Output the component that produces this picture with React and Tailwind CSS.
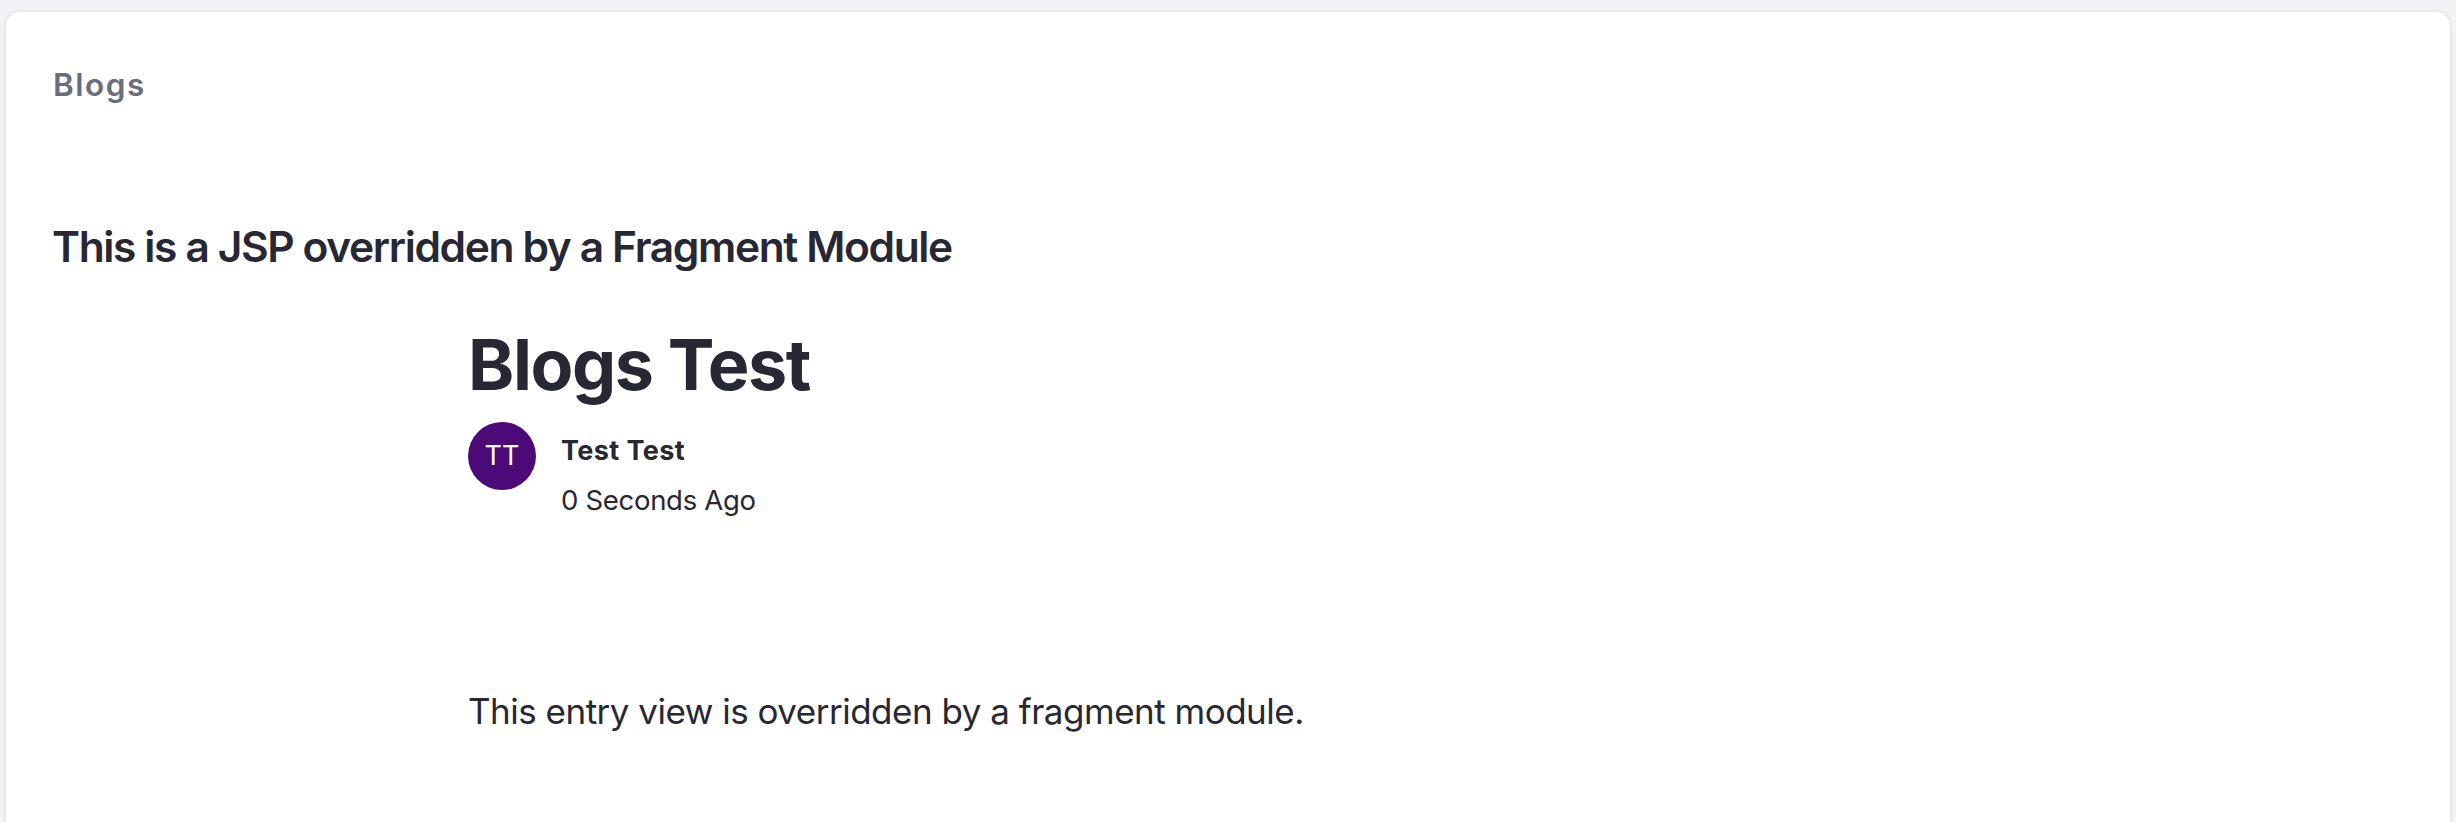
export default function App() {
  return (
    <div className="h-[822px] overflow-hidden bg-[#f1f2f5] px-[4px] pt-[10px] font-['Inter',sans-serif] text-[#272833]">
      <main className="h-[900px] rounded-[16px] border-2 border-[#e7e7ed] bg-white px-[47px] pt-[51px]">
        <h2 className="h-[44px] text-[31.5px] font-semibold leading-[44px] tracking-[1.5px] text-[#6b6c7e] whitespace-nowrap">Blogs</h2>
        <h3 className="-ml-px mt-[112px] h-[56px] text-[42.5px] font-semibold leading-[56px] tracking-[-1.38px] whitespace-nowrap">This is a JSP overridden by a Fragment Module</h3>
        <article className="ml-[415px] mt-[45px]">
          <h1 className="h-[90px] text-[70px] font-bold leading-[90px] tracking-[-1.4px] whitespace-nowrap">Blogs Test</h1>
          <div className="mt-[12px] flex gap-[25px]">
            <div className="flex size-[68px] items-center justify-center rounded-full bg-[#4b0a77] pt-px text-[27px] text-white">TT</div>
            <div className="pt-[4px] text-[27.5px] leading-[50px]">
              <div className="text-[27px] font-bold tracking-[0.4px]">Test Test</div>
              <div className="-mt-px tracking-[-0.3px]">0 Seconds Ago</div>
            </div>
          </div>
          <p className="mt-[159px] text-[35px] leading-[54px] tracking-[-0.5px] whitespace-nowrap">This entry view is overridden by a fragment module.</p>
        </article>
      </main>
    </div>
  );
}
